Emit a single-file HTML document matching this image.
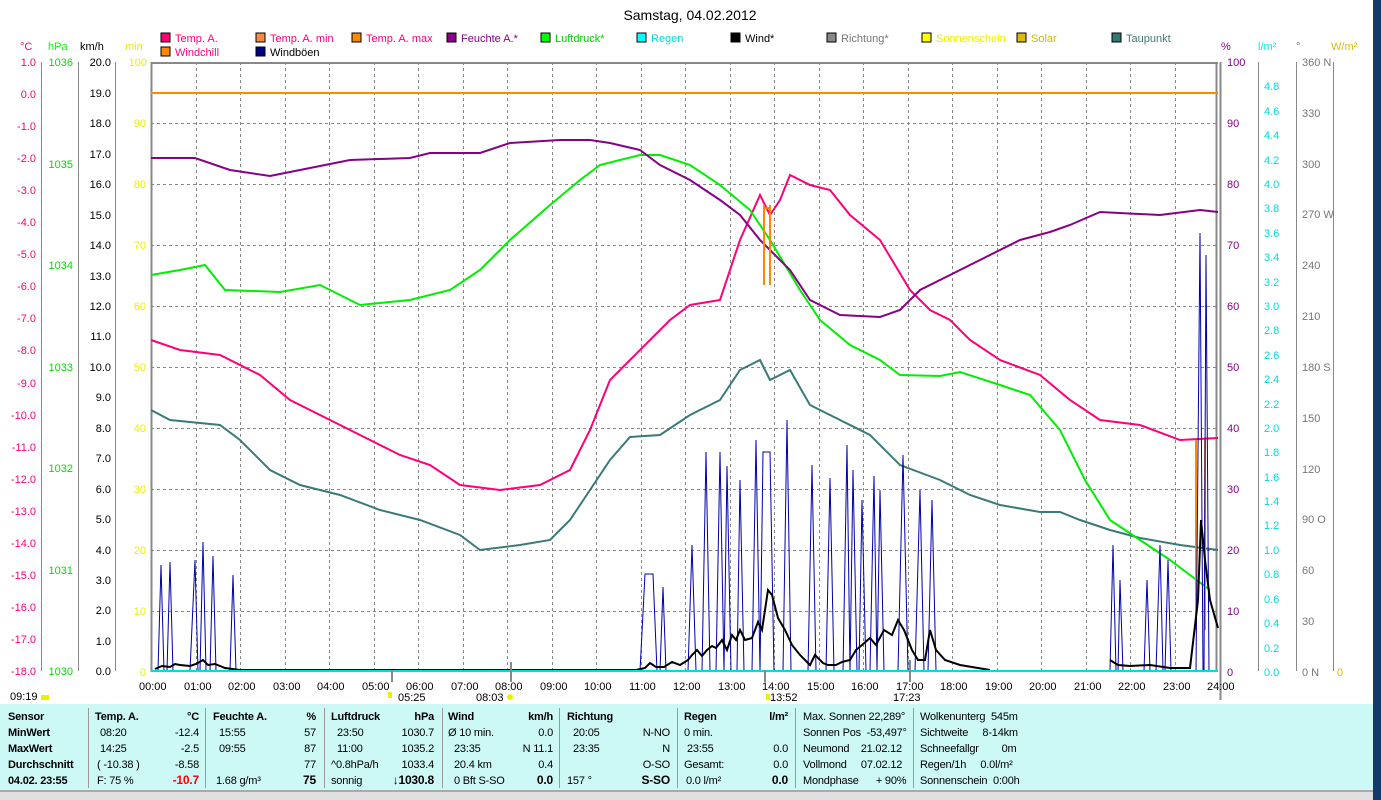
<!DOCTYPE html>
<html><head><meta charset="utf-8"><style>
body{margin:0;width:1381px;height:800px;background:#fff;overflow:hidden;font-family:"Liberation Sans",sans-serif;position:relative}
svg text{font-family:"Liberation Sans",sans-serif;font-size:11px}
.tbl{position:absolute;left:0;top:704px;width:1373px;height:86px;background:#ccf8f6;font-size:11px;color:#000;letter-spacing:-0.2px}
.tbl div{position:absolute;white-space:nowrap;line-height:13px}
.b{font-weight:bold}
.sep{position:absolute;top:4px;width:1px;height:80px;background:#999}
</style></head><body>
<svg width="1381" height="704" style="position:absolute;left:0;top:0">
<text x="690" y="20" text-anchor="middle" font-size="14" style="font-size:14px">Samstag, 04.02.2012</text>
<g font-size="11">
<rect x="161" y="33" width="9" height="9" fill="#f07" stroke="#000"/><text x="175" y="42" fill="#f07">Temp. A.</text>
<rect x="256" y="33" width="9" height="9" fill="#f84" stroke="#000"/><text x="270" y="42" fill="#f07">Temp. A. min</text>
<rect x="352" y="33" width="9" height="9" fill="#f80" stroke="#000"/><text x="366" y="42" fill="#f07">Temp. A. max</text>
<rect x="447" y="33" width="9" height="9" fill="#808" stroke="#000"/><text x="461" y="42" fill="#808">Feuchte A.*</text>
<rect x="541" y="33" width="9" height="9" fill="#0f0" stroke="#000"/><text x="555" y="42" fill="#0c0">Luftdruck*</text>
<rect x="637" y="33" width="9" height="9" fill="#0ff" stroke="#000"/><text x="651" y="42" fill="#0dd">Regen</text>
<rect x="731" y="33" width="9" height="9" fill="#000" stroke="#000"/><text x="745" y="42">Wind*</text>
<rect x="827" y="33" width="9" height="9" fill="#888" stroke="#000"/><text x="841" y="42" fill="#777">Richtung*</text>
<rect x="922" y="33" width="9" height="9" fill="#ff0" stroke="#000"/><text x="936" y="42" fill="#ee0">Sonnenschein</text>
<rect x="1017" y="33" width="9" height="9" fill="#db0" stroke="#000"/><text x="1031" y="42" fill="#cb0">Solar</text>
<rect x="1112" y="33" width="9" height="9" fill="#377" stroke="#000"/><text x="1126" y="42" fill="#477">Taupunkt</text>
<rect x="161" y="47" width="9" height="9" fill="#f80" stroke="#000"/><text x="175" y="56" fill="#f07">Windchill</text>
<rect x="256" y="47" width="9" height="9" fill="#008" stroke="#000"/><text x="270" y="56">Windböen</text>
</g>
<text x="20" y="50" fill="#f07">°C</text><text x="48" y="50" fill="#0f0">hPa</text><text x="80" y="50">km/h</text><text x="125" y="50" fill="#ee0">min</text>
<text x="1221" y="50" fill="#808">%</text><text x="1258" y="50" fill="#0ee">l/m²</text><text x="1296" y="50" fill="#777">°</text><text x="1331" y="50" fill="#db0">W/m²</text>
<g stroke="#888" stroke-dasharray="3,3" stroke-width="1">
<path d="M151 123.5H1218M151 184.5H1218M151 245.5H1218M151 306.5H1218M151 367.5H1218M151 428.5H1218M151 489.5H1218M151 550.5H1218M151 611.5H1218"/>
<path d="M196.5 62V671M240.5 62V671M285.5 62V671M329.5 62V671M374.5 62V671M418.5 62V671M463.5 62V671M507.5 62V671M552.5 62V671M596.5 62V671M641.5 62V671M685.5 62V671M730.5 62V671M774.5 62V671M819.5 62V671M863.5 62V671M908.5 62V671M952.5 62V671M997.5 62V671M1041.5 62V671M1086.5 62V671M1130.5 62V671M1175.5 62V671"/>
</g>
<path d="M151 63H1218M151.5 62V672M1216.5 62V672M1220.5 62V700" stroke="#888" stroke-width="2" fill="none"/>
<g stroke="#888" fill="none">
<path d="M41.5 62V671M78.5 62V671M115.5 62V671M1258.5 62V671M1296.5 62V671M1333.5 62V671"/>
</g>
<g font-size="11" text-anchor="end" fill="#f07">
<text x="36" y="66">1.0</text><text x="36" y="98">0.0</text><text x="36" y="130">-1.0</text><text x="36" y="162">-2.0</text><text x="36" y="194">-3.0</text><text x="36" y="226">-4.0</text><text x="36" y="258">-5.0</text><text x="36" y="290">-6.0</text><text x="36" y="322">-7.0</text><text x="36" y="354">-8.0</text><text x="36" y="387">-9.0</text><text x="36" y="419">-10.0</text><text x="36" y="451">-11.0</text><text x="36" y="483">-12.0</text><text x="36" y="515">-13.0</text><text x="36" y="547">-14.0</text><text x="36" y="579">-15.0</text><text x="36" y="611">-16.0</text><text x="36" y="643">-17.0</text><text x="36" y="675">-18.0</text>
</g>
<g font-size="11" text-anchor="end" fill="#0d0">
<text x="73" y="66">1036</text><text x="73" y="168">1035</text><text x="73" y="269">1034</text><text x="73" y="371">1033</text><text x="73" y="472">1032</text><text x="73" y="574">1031</text><text x="73" y="675">1030</text>
</g>
<g font-size="11" text-anchor="end" fill="#000">
<text x="111" y="66">20.0</text><text x="111" y="97">19.0</text><text x="111" y="127">18.0</text><text x="111" y="158">17.0</text><text x="111" y="188">16.0</text><text x="111" y="219">15.0</text><text x="111" y="249">14.0</text><text x="111" y="280">13.0</text><text x="111" y="310">12.0</text><text x="111" y="340">11.0</text><text x="111" y="371">10.0</text><text x="111" y="401">9.0</text><text x="111" y="432">8.0</text><text x="111" y="462">7.0</text><text x="111" y="493">6.0</text><text x="111" y="523">5.0</text><text x="111" y="554">4.0</text><text x="111" y="584">3.0</text><text x="111" y="614">2.0</text><text x="111" y="645">1.0</text><text x="111" y="675">0.0</text>
</g>
<g font-size="11" text-anchor="end" fill="#ee0">
<text x="147" y="66">100</text><text x="146" y="127">90</text><text x="146" y="188">80</text><text x="146" y="249">70</text><text x="146" y="310">60</text><text x="146" y="371">50</text><text x="146" y="432">40</text><text x="146" y="493">30</text><text x="146" y="554">20</text><text x="146" y="615">10</text><text x="146" y="676">0</text>
</g>
<g font-size="11" fill="#808">
<text x="1227" y="66">100</text><text x="1227" y="127">90</text><text x="1227" y="188">80</text><text x="1227" y="249">70</text><text x="1227" y="310">60</text><text x="1227" y="371">50</text><text x="1227" y="432">40</text><text x="1227" y="493">30</text><text x="1227" y="554">20</text><text x="1227" y="615">10</text><text x="1227" y="676">0</text>
</g>
<g font-size="11" fill="#0dd">
<text x="1264" y="90">4.8</text><text x="1264" y="115">4.6</text><text x="1264" y="139">4.4</text><text x="1264" y="164">4.2</text><text x="1264" y="188">4.0</text><text x="1264" y="212">3.8</text><text x="1264" y="237">3.6</text><text x="1264" y="261">3.4</text><text x="1264" y="286">3.2</text><text x="1264" y="310">3.0</text><text x="1264" y="334">2.8</text><text x="1264" y="359">2.6</text><text x="1264" y="383">2.4</text><text x="1264" y="408">2.2</text><text x="1264" y="432">2.0</text><text x="1264" y="456">1.8</text><text x="1264" y="481">1.6</text><text x="1264" y="505">1.4</text><text x="1264" y="529">1.2</text><text x="1264" y="554">1.0</text><text x="1264" y="578">0.8</text><text x="1264" y="603">0.6</text><text x="1264" y="627">0.4</text><text x="1264" y="652">0.2</text><text x="1264" y="676">0.0</text>
</g>
<g font-size="11" fill="#777">
<text x="1302" y="66">360 N</text><text x="1302" y="117">330</text><text x="1302" y="168">300</text><text x="1302" y="218">270 W</text><text x="1302" y="269">240</text><text x="1302" y="320">210</text><text x="1302" y="371">180 S</text><text x="1302" y="422">150</text><text x="1302" y="473">120</text><text x="1302" y="523">90 O</text><text x="1302" y="574">60</text><text x="1302" y="625">30</text><text x="1302" y="676">0 N</text>
</g>
<text x="1337" y="676" fill="#db0">0</text>
<path d="M151 93H1218" stroke="#f80" stroke-width="2"/>
<g fill="none" stroke-width="2">
<polyline stroke="#3a7a78" points="151,410 170,420 220,425 240,440 270,470 300,485 340,495 380,510 420,520 460,535 480,550 520,545 550,540 570,520 590,490 610,460 630,437 660,435 690,415 720,400 730,385 740,370 760,360 770,380 790,370 810,405 840,420 870,435 900,465 940,480 970,495 1000,505 1040,512 1060,512 1080,520 1110,530 1140,538 1180,545 1218,550"/>
<polyline stroke="#f07" points="151,340 180,350 220,355 260,375 290,400 330,420 370,440 400,455 430,465 460,485 500,490 540,485 570,470 590,430 610,380 630,360 650,340 670,320 690,305 720,300 740,240 760,195 770,215 780,200 790,175 810,185 830,190 850,215 880,240 910,290 930,310 950,320 970,340 1000,360 1040,375 1070,400 1100,420 1140,425 1180,440 1218,438"/>
<polyline stroke="#0e0" points="151,275 180,270 205,265 225,290 280,292 320,285 360,305 410,300 450,290 480,270 510,240 550,205 580,180 600,165 620,160 640,155 660,155 690,165 720,185 750,210 770,240 800,290 820,320 850,345 880,360 900,375 940,376 960,372 1000,385 1030,395 1060,430 1085,480 1110,520 1140,540 1170,560 1190,575 1210,590"/>
<polyline stroke="#808" points="151,158 195,158 230,170 270,176 300,170 350,160 410,158 430,153 480,153 510,143 560,140 590,140 610,143 640,150 660,165 690,180 720,200 740,215 760,240 790,270 810,300 840,315 880,317 900,310 920,290 950,275 980,260 1020,240 1050,232 1070,225 1100,212 1160,215 1200,210 1218,212"/>
<path d="M764 205V285M770 205V285M764 208H770M1196 440V630M1205 440V630" stroke="#f80"/>
</g>
<polyline fill="none" stroke="#00a" stroke-width="1" points="151,671 158,671 161,565 164,671 167,671 170,562 173,671 190,671 195,560 198,671 200,671 203,542 206,671 210,671 213,556 216,671 230,671 233,575 236,671 640,671 645,574 653,574 657,671 660,671 663,587 666,671 688,671 692,545 696,671 702,671 706,452 710,671 716,671 720,452 724,671 727,466 731,671 737,671 740,480 744,671 752,671 756,440 760,671 763,452 770,452 774,671 783,671 787,420 791,671 808,671 812,465 816,671 826,671 830,478 834,671 843,671 847,445 850,671 853,470 857,671 859,671 862,500 866,671 870,671 874,476 877,671 880,490 884,671 898,671 903,455 908,671 915,671 920,490 924,671 928,671 932,500 936,671 1110,671 1113,545 1116,671 1118,671 1120,580 1123,671 1144,671 1147,580 1150,671 1156,671 1160,545 1163,671 1165,671 1168,560 1171,671 1196,671 1200,233 1203,671 1204,671 1206,255 1209,671 1218,671"/>
<polyline fill="none" stroke="#000" stroke-width="2" points="155,669 162,666 170,667 175,664 180,665 190,666 196,664 203,660 208,665 215,664 225,668 240,670 636,670 645,668 650,663 656,667 664,667 672,662 680,665 688,660 692,655 697,650 702,656 707,650 712,646 716,648 722,640 727,650 732,635 736,640 740,630 745,640 752,638 758,622 762,630 768,590 772,595 778,618 785,630 792,645 800,655 810,665 815,655 823,663 828,665 836,665 842,662 850,660 856,650 862,645 870,638 876,645 884,630 892,635 898,620 904,630 912,650 918,660 925,660 930,630 936,650 945,660 960,665 990,670"/>
<polyline fill="none" stroke="#000" stroke-width="2" points="1110,660 1118,665 1130,666 1150,665 1170,668 1190,668 1198,600 1201,520 1205,560 1210,600 1218,628"/>
<path d="M151 671H1218" stroke="#0dd" stroke-width="2"/>
<path d="M392 670V682M511 662V682M765 670V682M910 660V682" stroke="#888" stroke-width="2"/>
<g font-size="11" fill="#000">
<text x="139" y="690">00:00</text><text x="184" y="690">01:00</text><text x="228" y="690">02:00</text><text x="273" y="690">03:00</text><text x="317" y="690">04:00</text><text x="362" y="690">05:00</text><text x="406" y="690">06:00</text><text x="451" y="690">07:00</text><text x="495" y="690">08:00</text><text x="540" y="690">09:00</text><text x="584" y="690">10:00</text><text x="629" y="690">11:00</text><text x="673" y="690">12:00</text><text x="718" y="690">13:00</text><text x="762" y="690">14:00</text><text x="807" y="690">15:00</text><text x="851" y="690">16:00</text><text x="896" y="690">17:00</text><text x="940" y="690">18:00</text><text x="985" y="690">19:00</text><text x="1029" y="690">20:00</text><text x="1074" y="690">21:00</text><text x="1118" y="690">22:00</text><text x="1163" y="690">23:00</text><text x="1207" y="690">24:00</text>
<text x="10" y="700">09:19</text><text x="398" y="701">05:25</text><text x="476" y="701">08:03</text><text x="770" y="701">13:52</text><text x="893" y="701">17:23</text>
</g>
<rect x="41" y="695" width="8" height="5" fill="#ee0"/><rect x="388" y="692" width="4" height="6" fill="#ee0"/><circle cx="510" cy="697" r="3" fill="#ee0"/><rect x="766" y="694" width="4" height="6" fill="#ee0"/>
<rect x="1373" y="0" width="8" height="704" fill="#123a6a"/>
</svg>
<div class="tbl">
<div class="sep" style="left:88px"></div><div class="sep" style="left:205px"></div><div class="sep" style="left:324px"></div><div class="sep" style="left:442px"></div><div class="sep" style="left:559px"></div><div class="sep" style="left:677px"></div><div class="sep" style="left:795px"></div><div class="sep" style="left:913px"></div>
<div class="b" style="left:8px;top:7px">Sensor</div><div class="b" style="left:8px;top:23px">MinWert</div><div class="b" style="left:8px;top:39px">MaxWert</div><div class="b" style="left:8px;top:55px">Durchschnitt</div><div class="b" style="left:8px;top:71px">04.02. 23:55</div>
<div class="b" style="left:95px;top:7px">Temp. A.</div><div class="b" style="right:1174px;top:7px">°C</div>
<div style="left:100px;top:23px">08:20</div><div style="right:1174px;top:23px">-12.4</div>
<div style="left:100px;top:39px">14:25</div><div style="right:1174px;top:39px">-2.5</div>
<div style="left:97px;top:55px">( -10.38 )</div><div style="right:1174px;top:55px">-8.58</div>
<div style="left:97px;top:71px">F: 75 %</div><div class="b" style="right:1174px;top:70px;color:#f00;font-size:12px">-10.7</div>
<div class="b" style="left:213px;top:7px">Feuchte A.</div><div class="b" style="right:1057px;top:7px">%</div>
<div style="left:219px;top:23px">15:55</div><div style="right:1057px;top:23px">57</div>
<div style="left:219px;top:39px">09:55</div><div style="right:1057px;top:39px">87</div>
<div style="right:1057px;top:55px">77</div>
<div style="left:216px;top:71px">1.68 g/m³</div><div class="b" style="right:1057px;top:70px;font-size:12px">75</div>
<div class="b" style="left:331px;top:7px">Luftdruck</div><div class="b" style="right:939px;top:7px">hPa</div>
<div style="left:337px;top:23px">23:50</div><div style="right:939px;top:23px">1030.7</div>
<div style="left:337px;top:39px">11:00</div><div style="right:939px;top:39px">1035.2</div>
<div style="left:331px;top:55px">^0.8hPa/h</div><div style="right:939px;top:55px">1033.4</div>
<div style="left:331px;top:71px">sonnig</div><div class="b" style="right:939px;top:70px;font-size:12px">↓1030.8</div>
<div class="b" style="left:448px;top:7px">Wind</div><div class="b" style="right:820px;top:7px">km/h</div>
<div style="left:448px;top:23px">Ø 10 min.</div><div style="right:820px;top:23px">0.0</div>
<div style="left:454px;top:39px">23:35</div><div style="right:820px;top:39px">N 11.1</div>
<div style="left:454px;top:55px">20.4 km</div><div style="right:820px;top:55px">0.4</div>
<div style="left:454px;top:71px">0 Bft S-SO</div><div class="b" style="right:820px;top:70px;font-size:12px">0.0</div>
<div class="b" style="left:567px;top:7px">Richtung</div>
<div style="left:573px;top:23px">20:05</div><div style="right:703px;top:23px">N-NO</div>
<div style="left:573px;top:39px">23:35</div><div style="right:703px;top:39px">N</div>
<div style="right:703px;top:55px">O-SO</div>
<div style="left:567px;top:71px">157 °</div><div class="b" style="right:703px;top:70px;font-size:12px">S-SO</div>
<div class="b" style="left:684px;top:7px">Regen</div><div class="b" style="right:585px;top:7px">l/m²</div>
<div style="left:684px;top:23px">0 min.</div>
<div style="left:687px;top:39px">23:55</div><div style="right:585px;top:39px">0.0</div>
<div style="left:684px;top:55px">Gesamt:</div><div style="right:585px;top:55px">0.0</div>
<div style="left:686px;top:71px">0.0 l/m²</div><div class="b" style="right:585px;top:70px;font-size:12px">0.0</div>
<div style="left:803px;top:7px">Max. Sonnen 22,289°</div><div style="left:803px;top:23px">Sonnen Pos&nbsp; -53,497°</div><div style="left:803px;top:39px">Neumond&nbsp;&nbsp;&nbsp; 21.02.12</div><div style="left:803px;top:55px">Vollmond&nbsp;&nbsp;&nbsp;&nbsp; 07.02.12</div><div style="left:803px;top:71px">Mondphase&nbsp;&nbsp;&nbsp;&nbsp;&nbsp; + 90%</div>
<div style="left:920px;top:7px">Wolkenunterg&nbsp; 545m</div><div style="left:920px;top:23px">Sichtweite&nbsp;&nbsp;&nbsp;&nbsp; 8-14km</div><div style="left:920px;top:39px">Schneefallgr&nbsp;&nbsp;&nbsp;&nbsp;&nbsp;&nbsp;&nbsp; 0m</div><div style="left:920px;top:55px">Regen/1h&nbsp;&nbsp;&nbsp;&nbsp; 0.0l/m²</div><div style="left:920px;top:71px">Sonnenschein&nbsp; 0:00h</div>
</div>
<div style="position:absolute;left:1373px;top:704px;width:8px;height:96px;background:#123a6a"></div>
<div style="position:absolute;left:0;top:790px;width:1373px;height:10px;background:#e0e0e0;border-top:2px solid #aaa;box-sizing:border-box"></div>
</body></html>
